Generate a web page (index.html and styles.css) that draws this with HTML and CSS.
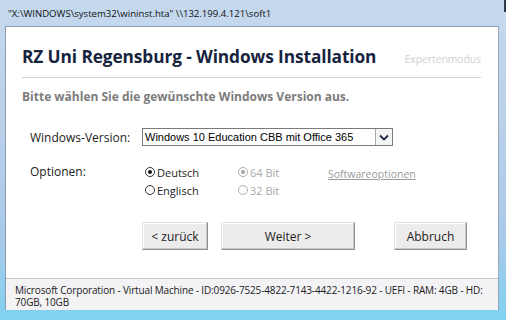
FILE: index.html
```html
<!DOCTYPE html>
<html>
<head>
<meta charset="utf-8">
<link rel="stylesheet" href="styles.css">
</head>
<body>
<div class="window">
  <div class="titlebar">"X:\WINDOWS\system32\wininst.hta" \\132.199.4.121\soft1</div>
  <div class="frame">
    <div class="client">
      <div class="content">
        <div class="head">
          <h1 class="title">RZ Uni Regensburg - Windows Installation</h1>
          <span class="expert">Expertenmodus</span>
        </div>
        <div class="rule"></div>
        <p class="sub">Bitte wählen Sie die gewünschte Windows Version aus.</p>
        <div class="row version">
          <span class="label">Windows-Version:</span>
          <div class="select">
            <span class="select-text">Windows 10 Education CBB mit Office 365</span>
            <span class="select-arrow"><svg width="10" height="7" viewBox="0 0 10 7"><path d="M1 1.5 L5 5.5 L9 1.5" fill="none" stroke="#1e2a44" stroke-width="1.8"/></svg></span>
          </div>
        </div>
        <div class="row options">
          <span class="label">Optionen:</span>
          <div class="radios">
            <div class="radio-col lang">
              <div class="radio"><span class="dot checked"></span>Deutsch</div>
              <div class="radio"><span class="dot"></span>Englisch</div>
            </div>
            <div class="radio-col bits">
              <div class="radio disabled"><span class="dot checked"></span>64 Bit</div>
              <div class="radio disabled"><span class="dot"></span>32 Bit</div>
            </div>
            <a class="softlink">Softwareoptionen</a>
          </div>
        </div>
        <div class="buttons">
          <button class="btn back">&lt; zurück</button>
          <button class="btn next">Weiter &gt;</button>
          <button class="btn cancel">Abbruch</button>
        </div>
      </div>
      <div class="status">Microsoft Corporation - Virtual Machine - ID:0926-7525-4822-7143-4422-1216-92 - UEFI - RAM: 4GB - HD: 70GB, 10GB</div>
    </div>
  </div>
  <div class="bottomframe"></div>
</div>
</body>
</html>
```
FILE: styles.css
```css
* { box-sizing: border-box; }
html, body { margin: 0; padding: 0; }
body {
  width: 506px;
  height: 320px;
  overflow: hidden;
  font-family: "Open Sans", "Noto Sans", sans-serif;
  background: #b9d1ea;
}
.window {
  display: flex;
  flex-direction: column;
  height: 320px;
  background: linear-gradient(to bottom, #c5d9ee 0%, #b9d0ea 40%, #a9c9ea 75%, #7fd2f0 100%);
}
.titlebar {
  height: 26px;
  padding-left: 8px;
  padding-top: 6px;
  font-size: 9.6px;
  line-height: 15px;
  color: #111;
  white-space: nowrap;
  overflow: hidden;
  border-right: 2px solid #4b5a70;
  border-image: linear-gradient(to bottom, #303a48 0, #303a48 12px, transparent 12px) 1;
}
.frame {
  flex: 1;
  display: flex;
  padding: 0 7px 0 5px;
}
.client {
  flex: 1;
  display: flex;
  flex-direction: column;
  background: #fff;
  border-left: 1px solid #8c9bb0;
  border-right: 1px solid #9aa8bc;
  border-top: 1px solid #8c9bb0;
}
.content {
  flex: 1;
  padding: 19px 17px 0 16px;
}
.head {
  display: flex;
  justify-content: space-between;
  align-items: baseline;
  height: 22px;
}
.title {
  margin: 0;
  font-size: 17.3px;
  line-height: 22px;
  font-weight: 700;
  color: #17243f;
  letter-spacing: -0.1px;
}
.expert {
  font-size: 10.3px;
  color: #cfcfcf;
}
.rule {
  height: 1px;
  background: #d4d4d4;
  margin-top: 9px;
}
.sub {
  margin: 11px 0 0 0;
  font-size: 12px;
  line-height: 16px;
  font-weight: 700;
  color: #7c7c7c;
}
.row {
  display: flex;
  padding-left: 8px;
}
.label {
  width: 112px;
  font-size: 12px;
  color: #222;
}
.version {
  margin-top: 23px;
  align-items: center;
  height: 18px;
}
.select {
  width: 251px;
  height: 18px;
  border: 1px solid #7a7a7a;
  display: flex;
  align-items: center;
  background: #fff;
}
.select-text {
  flex: 1;
  font-family: "Liberation Sans", Arial, sans-serif;
  font-size: 11px;
  color: #000;
  padding-left: 2px;
  line-height: 14px;
}
.select-arrow {
  width: 17px;
  height: 16px;
  border-left: 1px solid #a8a8a8;
  display: flex;
  align-items: center;
  justify-content: center;
  background: #f4f4f4;
}
.options {
  margin-top: 17px;
}
.options .label {
  line-height: 18px;
}
.radios {
  display: flex;
}
.radio-col {
  display: flex;
  flex-direction: column;
}
.lang { width: 96px; padding-left: 3px; }
.bits { width: 90px; }
.radio {
  display: flex;
  align-items: center;
  height: 18px;
  font-size: 11px;
  color: #222;
}
.radio.disabled { color: #a8a8a8; }
.dot {
  width: 10px;
  height: 10px;
  border: 1px solid #333;
  border-radius: 50%;
  margin-right: 2px;
  position: relative;
  background: #fff;
}
.dot.checked::after {
  content: "";
  position: absolute;
  left: 2px; top: 2px;
  width: 4px; height: 4px;
  border-radius: 50%;
  background: #111;
}
.disabled .dot { border-color: #b0b0b0; }
.disabled .dot.checked::after { background: #a0a0a0; }
.softlink {
  font-size: 10.5px;
  color: #9a9a9a;
  text-decoration: underline;
  line-height: 18px;
  margin-top: 2px;
}
.buttons {
  display: flex;
  margin-top: 23px;
  padding-left: 120px;
}
.btn {
  height: 28px;
  font-family: "Open Sans", "Noto Sans", sans-serif;
  font-size: 12px;
  color: #222;
  background: #ececec;
  border: 1px solid #e2e2e2;
  border-right-color: #8f8f8f;
  border-bottom-color: #8f8f8f;
  box-shadow: inset -1px -1px 0 #c8c8c8, inset 1px 1px 0 #fff;
  padding: 0;
}
.back { width: 66px; }
.next { width: 134px; margin-left: 13px; }
.cancel { width: 73px; margin-left: 39px; }
.status {
  height: 32px;
  border-top: 1px solid #c9c9c9;
  background: #f3f3f5;
  padding: 5px 8px 0 9px;
  font-size: 10px;
  line-height: 12px;
  color: #1a1a1a;
  letter-spacing: -0.15px;
}
.bottomframe {
  height: 10px;
}
```
